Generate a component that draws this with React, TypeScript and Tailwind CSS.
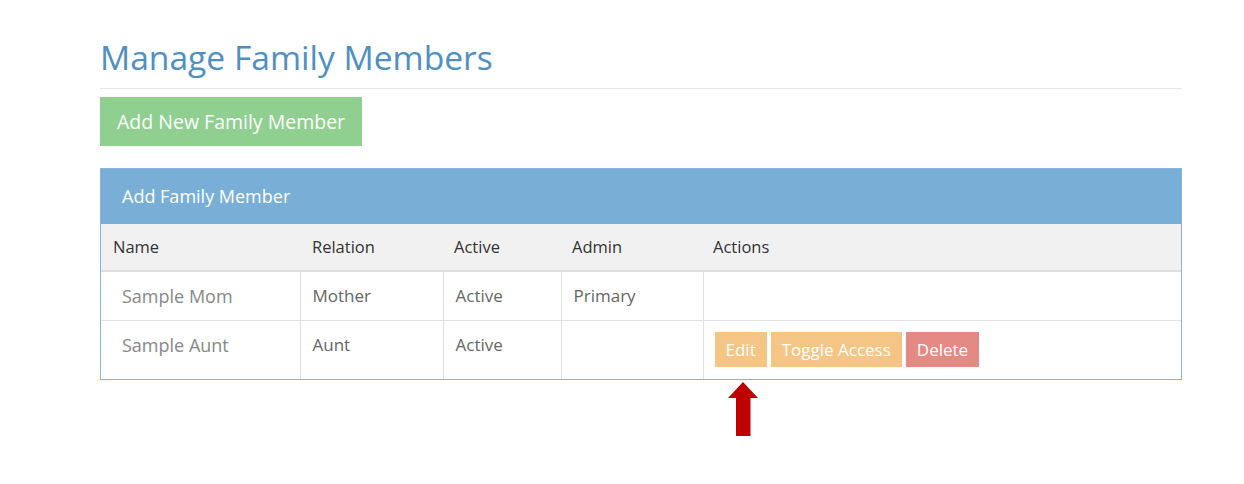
import React from "react";

export default function App() {
  const font = { fontFamily: '"Open Sans", "Noto Sans", sans-serif' };
  const td = "align-top pt-[12px] pb-[12px] px-[12px] border-l border-[#e2e2e2]";
  return (
    <div className="w-[1244px] h-[484px] bg-white relative" style={font}>
      <div className="pl-[100px] pr-[62px] pt-[34px]">
        <h1 className="text-[33.6px] leading-[46px] text-[#4f8fc2] font-normal">Manage Family Members</h1>
        <div className="mt-[8px] h-px bg-[#e6e6e6]" />
        <button className="mt-[8px] h-[49px] px-[17px] bg-[#8fcf8f] text-white text-[19.5px] leading-[24px]">
          Add New Family Member
        </button>
        <div className="mt-[22px] border border-[#86b4da]">
          <div className="h-[55px] bg-[#79afd7] flex items-center pl-[21px] text-white text-[18px]">
            Add Family Member
          </div>
          <table className="w-full border-collapse text-[17px] leading-[24px]">
            <colgroup>
              <col className="w-[199px]" />
              <col className="w-[143px]" />
              <col className="w-[118px]" />
              <col className="w-[142px]" />
              <col />
            </colgroup>
            <thead>
              <tr className="bg-[#f1f1f1] border-b-2 border-[#dddddd] text-[#333333] text-[16.5px]">
                <th className="text-left font-medium px-[12px] h-[47px]">Name</th>
                <th className="text-left font-medium px-[12px]">Relation</th>
                <th className="text-left font-medium px-[11px]">Active</th>
                <th className="text-left font-medium px-[11px]">Admin</th>
                <th className="text-left font-medium px-[10px]">Actions</th>
              </tr>
            </thead>
            <tbody className="text-[#666666]">
              <tr className="border-b border-[#e2e2e2]">
                <td className="align-top pt-[12px] pb-[12px] pl-[21px] text-[#888888] text-[18px]">Sample Mom</td>
                <td className={td}>Mother</td>
                <td className={td}>Active</td>
                <td className={td}>Primary</td>
                <td className={td}></td>
              </tr>
              <tr>
                <td className="align-top pt-[12px] pb-[12px] pl-[21px] text-[#888888] text-[18px]">Sample Aunt</td>
                <td className={td}>Aunt</td>
                <td className={td}>Active</td>
                <td className={td}></td>
                <td className="align-top pt-[11px] pb-[12px] pl-[11px] border-l border-[#e2e2e2]">
                  <div className="flex gap-[4px]">
                    <button className="h-[35px] px-[11px] bg-[#f5c586] text-white">Edit</button>
                    <button className="h-[35px] px-[11px] bg-[#f5c586] text-white">Toggle Access</button>
                    <button className="h-[35px] px-[11px] bg-[#e58985] text-white">Delete</button>
                  </div>
                </td>
              </tr>
            </tbody>
          </table>
        </div>
      </div>
      <svg className="absolute left-[727px] top-[382px]" width="32" height="54" viewBox="0 0 32 54">
        <polygon points="16,0 31,16 23.5,16 23.5,54 9,54 9,16 1,16" fill="#c00000" />
      </svg>
    </div>
  );
}
